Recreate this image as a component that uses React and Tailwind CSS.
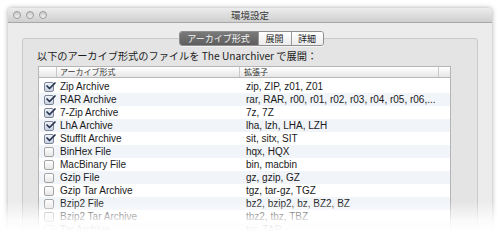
import { Check } from 'lucide-react'

const rows = [
  { name: 'Zip Archive', ext: 'zip, ZIP, z01, Z01', on: true },
  { name: 'RAR Archive', ext: 'rar, RAR, r00, r01, r02, r03, r04, r05, r06,...', on: true },
  { name: '7-Zip Archive', ext: '7z, 7Z', on: true },
  { name: 'LhA Archive', ext: 'lha, lzh, LHA, LZH', on: true },
  { name: 'StuffIt Archive', ext: 'sit, sitx, SIT', on: true },
  { name: 'BinHex File', ext: 'hqx, HQX', on: false },
  { name: 'MacBinary File', ext: 'bin, macbin', on: false },
  { name: 'Gzip File', ext: 'gz, gzip, GZ', on: false },
  { name: 'Gzip Tar Archive', ext: 'tgz, tar-gz, TGZ', on: false },
  { name: 'Bzip2 File', ext: 'bz2, bzip2, bz, BZ2, BZ', on: false },
  { name: 'Bzip2 Tar Archive', ext: 'tbz2, tbz, TBZ', on: false },
  { name: 'Tar Archive', ext: 'tar, TAR', on: false },
]

const jp = { fontFamily: '"Noto Sans CJK JP", "Liberation Sans", sans-serif' }
const lat = { fontFamily: '"Liberation Sans", "Noto Sans CJK JP", sans-serif' }

function Box({ on }) {
  return (
    <div className={`relative w-[10px] h-[10px] rounded-[2px] border ${on ? 'border-[#7d8699] bg-gradient-to-b from-[#eef2f8] to-[#c9d2e0]' : 'border-[#a4a4a4] bg-gradient-to-b from-white to-[#e6e6e6]'}`}>
      {on && <Check size={12} strokeWidth={3.4} className="absolute -top-[3px] left-[0px] text-[#26314d]" />}
    </div>
  )
}

export default function App() {
  return (
    <div className="relative w-[500px] h-[243px] bg-white overflow-hidden pt-[8px] pl-[8px]">
      {/* window */}
      <div className="w-[484px] h-[260px] rounded-t-[4px] bg-[#ececec] shadow-[0_0_5px_rgba(0,0,0,0.35)] flex flex-col">
        {/* title bar */}
        <div className="h-[15px] shrink-0 rounded-t-[4px] bg-gradient-to-b from-[#ececec] to-[#cfcfcf] border-b border-[#a8a8a8] flex items-center px-[5px]">
          <div className="flex gap-[5px]">
            {[0, 1, 2].map(i => (
              <div key={i} className="w-[8px] h-[8px] rounded-full border border-[#9c9c9c] bg-gradient-to-b from-[#c9c9c9] to-[#f2f2f2]" />
            ))}
          </div>
          <div className="flex-1 text-center text-[9.5px] text-[#3a3a3a] -ml-[34px]" style={jp}>環境設定</div>
        </div>

        {/* body */}
        <div className="flex-1 px-[14px] pt-[8px]">
          {/* tabs */}
          <div className="flex justify-center relative z-10 pl-[2px]">
            <div className="flex h-[15px] text-[9px] leading-[13px] rounded-[3px] border border-[#8e8e8e] overflow-hidden shadow-[0_1px_0_rgba(255,255,255,0.6)]" style={jp}>
              <div className="w-[78px] text-center bg-gradient-to-b from-[#7a7a7a] to-[#5e5e5e] text-[#f4f4f4]">アーカイブ形式</div>
              <div className="w-[33px] text-center bg-gradient-to-b from-white to-[#ececec] text-[#222] border-l border-[#9a9a9a]">展開</div>
              <div className="w-[32px] text-center bg-gradient-to-b from-white to-[#ececec] text-[#222] border-l border-[#9a9a9a]">詳細</div>
            </div>
          </div>

          {/* group box */}
          <div className="-mt-[8px] h-[240px] rounded-[3px] border border-[#c9c9c9] bg-[#e4e4e4] pt-[10px] px-[15px]">
            <div className="text-[10.2px] text-[#1c1c1c] h-[14px] leading-[14px] -ml-[1px]" style={jp}>
              以下のアーカイブ形式のファイルを The Unarchiver で展開：
            </div>

            {/* table */}
            <div className="mt-[3px] w-[413px] bg-white border border-[#b5b5b5]">
              <div className="flex h-[11px] bg-gradient-to-b from-white to-[#e6e6e6] border-b border-[#b8b8b8] text-[8px] leading-[10px] text-[#333]" style={jp}>
                <div className="w-[18px] border-r border-[#c9c9c9]" />
                <div className="w-[183px] pl-[3px] border-r border-[#c9c9c9]">アーカイブ形式</div>
                <div className="w-[199px] pl-[4px] border-r border-[#c9c9c9]">拡張子</div>
                <div className="flex-1" />
              </div>
              <div className="pt-[2px]">
                {rows.map((r, i) => (
                  <div
                    key={r.name}
                    className={`flex items-center h-[13px] text-[10px] text-[#1a1a1a] ${i % 2 ? 'bg-[#f1f4f8]' : 'bg-white'}`}
                    style={lat}
                  >
                    <div className="w-[18px] flex justify-center pl-[1px]"><Box on={r.on} /></div>
                    <div className="w-[183px] pl-[3px]">{r.name}</div>
                    <div className="w-[199px] pl-[6px] whitespace-nowrap">{r.ext}</div>
                  </div>
                ))}
              </div>
            </div>
          </div>
        </div>
      </div>

      {/* bottom fade */}
      <div className="absolute left-0 right-0 bottom-0 h-[42px] bg-[linear-gradient(to_bottom,rgba(255,255,255,0)_0%,rgba(255,255,255,0.8)_45%,#ffffff_72%)]" />
    </div>
  )
}
